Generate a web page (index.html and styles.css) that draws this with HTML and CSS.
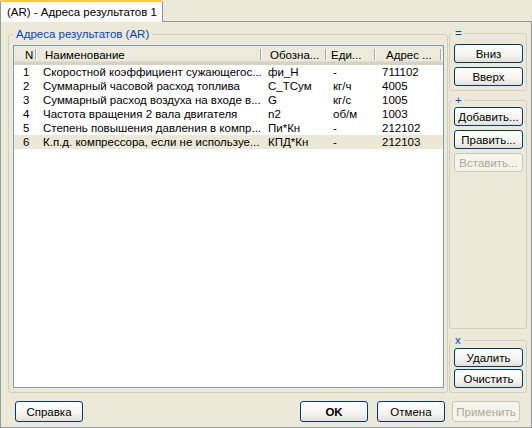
FILE: index.html
```html
<!DOCTYPE html>
<html lang="ru">
<head>
<meta charset="utf-8">
<title>(AR) - Адреса результатов 1</title>
<link rel="stylesheet" href="styles.css">
</head>
<body>
<div class="tabs">
  <div class="tab">(AR) - Адреса результатов 1</div>
</div>
<div class="pane">
  <div class="main">
    <fieldset class="group results">
      <legend>Адреса результатов (AR)</legend>
      <div class="list">
        <div class="head">
          <div class="hc c-n">N</div>
          <div class="hc c-name">Наименование</div>
          <div class="hc c-des">Обозна...</div>
          <div class="hc c-unit">Еди...</div>
          <div class="hc c-addr">Адрес ...</div>
        </div>
        <div class="row"><span class="c-n">1</span><span>Скоростной коэффициент сужающегос...</span><span>фи_Н</span><span>-</span><span>711102</span></div>
        <div class="row"><span class="c-n">2</span><span>Суммарный часовой расход топлива</span><span>С_ТСум</span><span>кг/ч</span><span>4005</span></div>
        <div class="row"><span class="c-n">3</span><span>Суммарный расход воздуха на входе в...</span><span>G</span><span>кг/с</span><span>1005</span></div>
        <div class="row"><span class="c-n">4</span><span>Частота вращения 2 вала двигателя</span><span>n2</span><span>об/м</span><span>1003</span></div>
        <div class="row"><span class="c-n">5</span><span>Степень повышения давления в компр...</span><span>Пи*Кн</span><span>-</span><span>212102</span></div>
        <div class="row sel"><span class="c-n">6</span><span>К.п.д. компрессора, если не используе...</span><span>КПД*Кн</span><span>-</span><span>212103</span></div>
      </div>
    </fieldset>
    <div class="side">
      <fieldset class="group g-move">
        <legend>=</legend>
        <button class="btn">Вниз</button>
        <button class="btn">Вверх</button>
      </fieldset>
      <fieldset class="group g-edit">
        <legend>+</legend>
        <button class="btn">Добавить...</button>
        <button class="btn">Править...</button>
        <button class="btn" disabled>Вставить...</button>
      </fieldset>
      <fieldset class="group g-del">
        <legend>x</legend>
        <button class="btn">Удалить</button>
        <button class="btn">Очистить</button>
      </fieldset>
    </div>
  </div>
  <div class="footer">
    <button class="btn big">Справка</button>
    <div class="spacer"></div>
    <button class="btn big ok">OK</button>
    <button class="btn big">Отмена</button>
    <button class="btn big" disabled>Применить</button>
  </div>
</div>
</body>
</html>
```
FILE: styles.css
```css
* { box-sizing: border-box; }
html, body { margin: 0; padding: 0; }
body {
  width: 532px;
  height: 428px;
  overflow: hidden;
  background: #ece9d8;
  font: 11.5px "Liberation Sans", Tahoma, sans-serif;
  color: #000;
}

.tabs { height: 21px; display: flex; align-items: flex-end; }
.tab {
  position: relative;
  z-index: 1;
  width: 163px;
  height: 22px;
  margin-bottom: -1px;
  border: 1px solid #919b9c;
  border-bottom: none;
  border-top: 2px solid #ffc83c;
  border-radius: 3px 3px 0 0;
  background: linear-gradient(#ffffff, #fcfcfe 70%, #f8f8f6);
  padding: 3px 0 0 6px;
  line-height: 14px;
  white-space: nowrap;
}

.pane {
  height: 407px;
  border: 1px solid #919b9c;
  padding: 5px 4px 5px 7px;
  display: flex;
  flex-direction: column;
}
.main { height: 366px; display: flex; }

.group {
  margin: 0;
  min-width: 0;
  border: 1px solid #d0d0bf;
  border-radius: 3px;
}
.group legend {
  color: #0046d5;
  padding: 0 3px;
  line-height: 15px;
}

.results {
  width: 440px;
  padding: 3px 3px 4px 4px;
  display: flex;
  flex-direction: column;
}

.list {
  height: 343px;
  border: 1px solid #7f9db9;
  background: #fff;
}
.head, .row {
  display: grid;
  grid-template-columns: 23px 225px 65px 49px 66px;
}
.head {
  height: 19px;
  background: #ebeadb;
  border-bottom: 3px solid #d6d3c4;
  box-shadow: inset 0 -1px 0 #e2decd;
}
.hc {
  padding: 2px 0 0 8px;
  line-height: 14px;
  white-space: nowrap;
  overflow: hidden;
  background:
    linear-gradient(#aca899, #aca899) right 1px top 3px / 1px 11px no-repeat,
    linear-gradient(#fff, #fff) right 0 top 3px / 1px 11px no-repeat;
}
.hc.c-n { padding-left: 11px; }
.hc.c-unit { padding-left: 4px; }
.hc.c-addr { padding-left: 10px; }

.row { height: 14px; line-height: 14px; }
.row span { padding-left: 6px; white-space: nowrap; overflow: hidden; }
.row span.c-n { padding-left: 9px; }
.row.sel { background: #ebe8d7; }

.side {
  width: 78px;
  margin-left: 1px;
  display: flex;
  flex-direction: column;
}
.side .group {
  padding: 0 3px 0 4px;
  display: flex;
  flex-direction: column;
  gap: 4px;
}
.side .group legend { line-height: 13px; margin-left: -2px; }
.g-move { padding-top: 4px !important; padding-bottom: 4px !important; }
.g-edit { margin-top: 3px; flex: 1; padding-top: 0 !important; }
.g-del { margin-top: 5px; padding-top: 1px !important; padding-bottom: 4px !important; gap: 2px !important; }

.btn {
  height: 19px;
  margin: 0;
  padding: 0;
  font: inherit;
  color: #000;
  border: 1px solid #003c74;
  border-radius: 3px;
  background: linear-gradient(#ffffff, #f5f4ef 60%, #e3e0d6);
  white-space: nowrap;
}
.btn:disabled {
  color: #aca899;
  border-color: #c9c7ba;
  background: #f5f4ea;
}

.footer {
  margin-top: 8px;
  height: 21px;
  display: flex;
  padding: 0 7px 0 7px;
}
.btn.big { width: 68px; height: 21px; }
.spacer { flex: 1; }
.ok { font-weight: bold; margin-right: 9px; }
.footer .btn:nth-child(4) { margin-right: 7px; }
```
